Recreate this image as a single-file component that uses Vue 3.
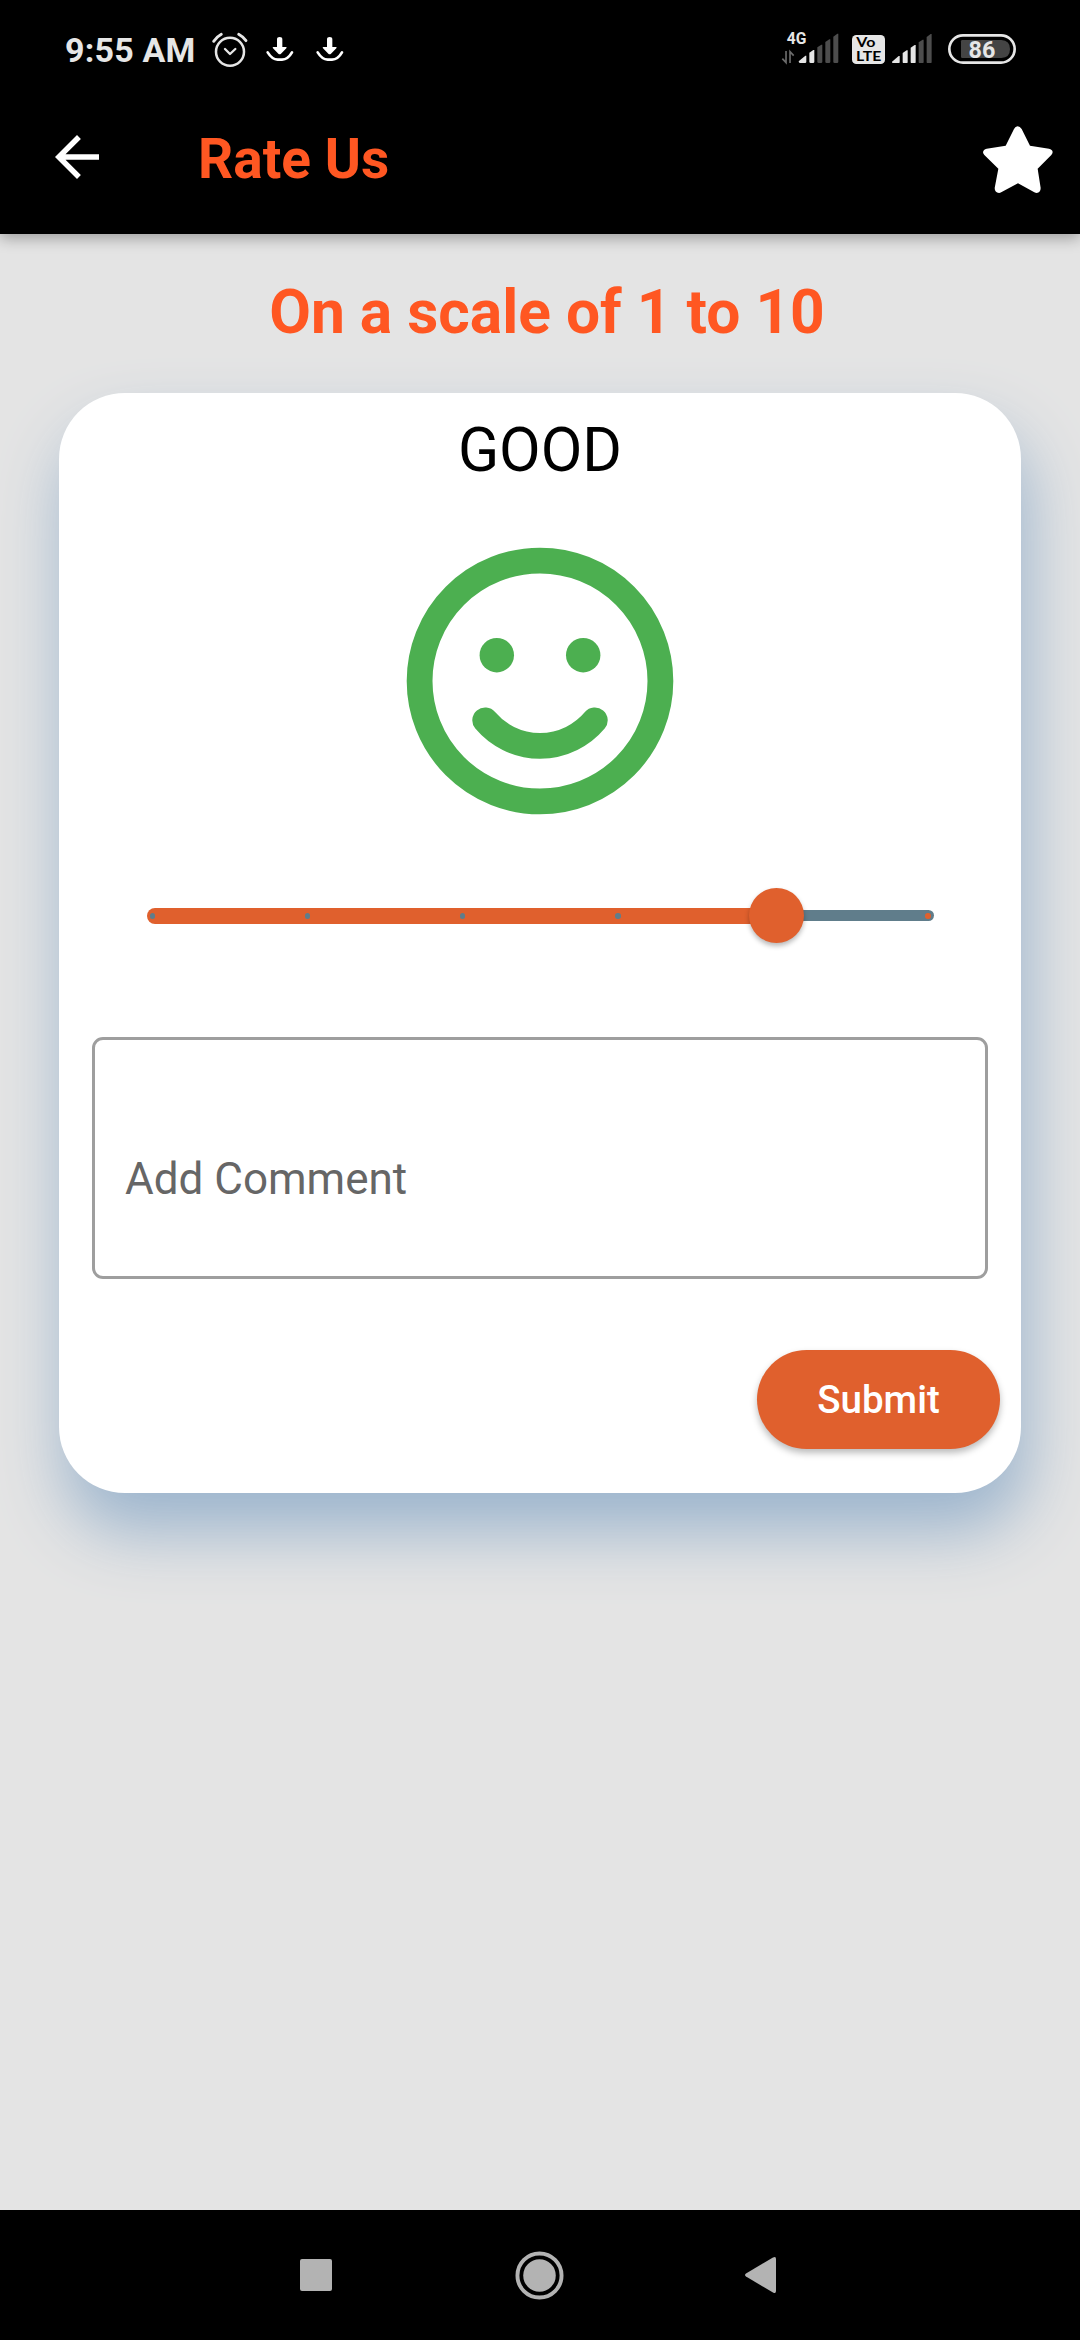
<script setup>
import { ref, computed } from 'vue'

const max = 5
const rating = ref(4)
const comment = ref('')
const percent = computed(() => (rating.value / max) * 100)
const ticks = Array.from({ length: max + 1 }, (_, i) => i).filter((i) => i !== rating.value)

const bars = [
  'M0 83 L20 66 H23 V84 Q23 88 19 88 H4 Q0 88 0 83z',
  'M32 57 L44 49 H47 V84 Q47 88 43 88 H36 Q32 88 32 84z',
  'M56 41 L68 33 H71 V84 Q71 88 67 88 H60 Q56 88 56 84z',
  'M80 25 L92 17 H95 V84 Q95 88 91 88 H84 Q80 88 80 84z',
  'M104 9 L116 0 H119 V84 Q119 88 115 88 H108 Q104 88 104 84z',
]
</script>

<template>
  <div class="screen">
    <header class="top">
      <div class="status">
        <span class="time">9:55 AM</span>
        <svg class="alarm" viewBox="510 36 120 108" fill="none" stroke="#e6e6e6" stroke-linecap="round" stroke-linejoin="round">
          <circle cx="570" cy="95" r="42" stroke-width="7.5" />
          <path d="M555 87l15 15 16-15" stroke-width="7" />
          <path d="M521 64Q531 50 544 43M596 43Q609 50 618 62" stroke-width="8.5" />
        </svg>
        <svg v-for="n in 2" :key="n" class="download" viewBox="676 48 90 78">
          <path d="M684 97Q697 118 714 119H727Q745 118 757 97" fill="none" stroke="#fff" stroke-width="8" stroke-linecap="round" />
          <path d="M712 58Q712 51 720 51Q728 51 728 58V81H739Q743 82 740 85L724 101Q720 105 716 101L700 85Q697 82 701 81H712z" fill="#fff" />
        </svg>
        <span class="spacer"></span>
        <svg class="mobile" viewBox="32 30 174 118">
          <text x="49" y="87" class="gen">4G</text>
          <g fill="none" stroke="#6a6a6a" stroke-width="5">
            <path d="M47 108V143L36 131" />
            <path d="M59 144V110L70 122" />
          </g>
          <g transform="translate(85 56)">
            <path v-for="(d, i) in bars" :key="i" :d="d" :fill="i < 2 ? '#e6e6e6' : '#4d4d4d'" />
          </g>
        </svg>
        <svg class="volte" viewBox="246 60 99 87">
          <rect x="246" y="60" width="99" height="87" rx="13" fill="#e6e6e6" />
          <text x="259" y="96" class="vo" textLength="57" lengthAdjust="spacingAndGlyphs">Vo</text>
          <text x="258" y="138" class="lte" textLength="76" lengthAdjust="spacingAndGlyphs">LTE</text>
        </svg>
        <svg class="signal" viewBox="0 0 120 88">
          <path v-for="(d, i) in bars" :key="i" :d="d" :fill="i < 3 ? '#e6e6e6' : '#4d4d4d'" />
        </svg>
        <svg class="battery" viewBox="534 57 204 90">
          <rect x="538" y="61" width="196" height="82" rx="41" fill="none" stroke="#e6e6e6" stroke-width="8" />
          <path d="M577 75H694Q720 76 720 102T694 129H577Q573 129 573 125V79Q573 75 577 75z" fill="#444" />
          <text x="636" y="128" text-anchor="middle" class="level">86</text>
        </svg>
      </div>
      <div class="appbar">
        <svg class="back" viewBox="0 0 24 24" fill="#fff">
          <path d="M20 11H7.83l5.59-5.59L12 4l-8 8 8 8 1.41-1.41L7.83 13H20v-2z" />
        </svg>
        <h1 class="title">Rate Us</h1>
        <svg class="star" viewBox="130 80 210 202" fill="#fff">
          <path d="M198 139L223 89Q227 81 234 81T246 89L271 139L328 148Q338 150 339 158Q339 162 335 167L294 208L303 266Q303 280 291 281Q288 281 284 279L235 252L186 278Q181 281 178 281Q165 280 165 266L176 208L134 167Q130 163 130 159Q131 150 141 148z" />
        </svg>
      </div>
    </header>

    <main class="content">
      <h2 class="heading">On a scale of 1 to 10</h2>
      <section class="card">
        <p class="mood">GOOD</p>
        <svg class="smiley" viewBox="-134 -134 268 268">
          <circle r="120.4" fill="none" stroke="#4caf50" stroke-width="25.8" />
          <circle cx="-43.2" cy="-25.8" r="17.2" fill="#4caf50" />
          <circle cx="43.2" cy="-25.8" r="17.2" fill="#4caf50" />
          <path d="M-54.8 39.3A71.6 71.6 0 0 0 54.8 39.3" fill="none" stroke="#4caf50" stroke-width="25.8" stroke-linecap="round" />
        </svg>
        <div class="slider">
          <div class="track">
            <div class="active" :style="{ width: percent + '%' }"></div>
            <div class="rest"></div>
          </div>
          <div class="marks">
            <i
              v-for="t in ticks"
              :key="t"
              class="tick"
              :class="{ off: t > rating }"
              :style="{ left: (t / max) * 100 + '%' }"
            ></i>
          </div>
          <div class="thumb" :style="{ left: percent + '%' }"></div>
        </div>
        <div class="field">{{ comment || 'Add Comment' }}</div>
        <button class="submit" type="button">Submit</button>
      </section>
    </main>

    <nav class="nav">
      <svg class="square" viewBox="0 0 32 32"><rect width="32" height="32" rx="2" fill="#b3b3b3" /></svg>
      <svg class="home" viewBox="0 0 50 50">
        <circle cx="25" cy="25" r="22.5" fill="none" stroke="#b3b3b3" stroke-width="4" />
        <circle cx="25" cy="25" r="16.6" fill="#b3b3b3" />
      </svg>
      <svg class="prev" viewBox="0 0 31 36"><path d="M1 16.5L28 .5Q31 -1 31 2V34Q31 37 28 35.500L1 19.500Q-1 18 1 16.500z" fill="#b3b3b3" /></svg>
    </nav>
  </div>
</template>

<style>
body {
  margin: 0;
  background: #e4e4e4;
}
</style>

<style scoped>
.screen {
  width: 1080px;
  height: 2340px;
  display: flex;
  flex-direction: column;
  overflow: hidden;
  background: #e4e4e4;
  font-family: Roboto, "Noto Sans", sans-serif;
}
svg {
  display: block;
  flex: none;
}
.top {
  height: 234px;
  flex: none;
  background: #000;
  box-shadow: 0 4px 14px rgba(0, 0, 0, 0.32);
}
.status {
  height: 80px;
  box-sizing: border-box;
  padding: 20px 64px 0 65px;
  display: flex;
  align-items: flex-start;
}
.time {
  width: 145px;
  height: 60px;
  line-height: 61px;
  font-size: 34px;
  font-weight: 700;
  letter-spacing: 0.2px;
  white-space: nowrap;
  color: #e6e6e6;
}
.alarm {
  width: 40px;
  height: 36px;
  margin-top: 12px;
  margin-right: 15px;
}
.download {
  width: 30px;
  height: 26px;
  margin-top: 16px;
  margin-right: 20px;
}
.spacer {
  flex: 1;
}
.mobile {
  width: 58px;
  height: 39.300px;
  margin-top: 5px;
  overflow: visible;
}
.gen {
  font: 700 47px Roboto, sans-serif;
  fill: #e6e6e6;
}
.volte {
  width: 33px;
  height: 29px;
  margin: 15px 0 0 13.300px;
}
.vo {
  font: 700 37px Lato, sans-serif;
  fill: #000;
}
.lte {
  font: 700 41px Lato, sans-serif;
  fill: #000;
}
.signal {
  width: 40px;
  height: 29.300px;
  margin: 13.700px 0 0 7px;
}
.battery {
  width: 68px;
  height: 30px;
  margin: 14px 0 0 16px;
}
.level {
  font: 700 70px Roboto, sans-serif;
  fill: #e6e6e6;
}
.appbar {
  height: 154px;
  box-sizing: border-box;
  padding: 0 27px 0 44px;
  display: flex;
  align-items: center;
}
.back {
  width: 66px;
  height: 66px;
}
.title {
  flex: 1;
  margin: 4px 0 0 88px;
  font-size: 55px;
  line-height: 66px;
  font-weight: 700;
  color: #ff5722;
}
.star {
  width: 70px;
  height: 67.300px;
  margin-top: 6px;
}
.content {
  flex: 1;
  padding: 0 59px;
}
.heading {
  margin: 42px 0 0;
  padding-left: 14px;
  height: 117.300px;
  line-height: 73px;
  font-size: 60.500px;
  font-weight: 700;
  text-align: center;
  color: #ff5722;
}
.card {
  height: 1100px;
  box-sizing: border-box;
  padding: 22px 21px 0 33px;
  display: flex;
  flex-direction: column;
  border-radius: 66px;
  background: #fff;
  box-shadow: 6px 38px 66px rgb(155, 180, 205);
}
.mood {
  margin: 0 12px 0 0;
  line-height: 72px;
  font-size: 60.500px;
  text-align: center;
  color: #000;
}
.smiley {
  width: 268px;
  height: 268px;
  margin: 59.500px 0 0 314px;
}
.slider {
  position: relative;
  width: 786.500px;
  height: 55px;
  margin: 73.500px 0 0 55px;
}
.track {
  height: 55px;
  display: flex;
  align-items: center;
}
.active {
  height: 16.500px;
  border-radius: 8.250px 0 0 8.250px;
  background: #e0602d;
}
.rest {
  flex: 1;
  height: 11px;
  border-radius: 0 5.500px 5.500px 0;
  background: #607d8b;
}
.marks {
  position: absolute;
  top: 24.750px;
  left: 5.500px;
  right: 5.500px;
}
.tick {
  position: absolute;
  top: 0;
  width: 5.500px;
  height: 5.500px;
  margin-left: -2.750px;
  border-radius: 50%;
  background: #607d8b;
}
.tick.off {
  background: #e0602d;
}
.thumb {
  position: absolute;
  top: 0;
  width: 55px;
  height: 55px;
  margin-left: -27.500px;
  border-radius: 50%;
  background: #e0602d;
  box-shadow: 0 3px 5px rgba(0, 0, 0, 0.28);
}
.field {
  width: 896px;
  height: 242px;
  box-sizing: border-box;
  margin-top: 93.500px;
  padding: 38px 30px 0;
  border: 3px solid #9e9e9e;
  border-radius: 11px;
  font-size: 44px;
  line-height: 203px;
  color: #666;
}
.submit {
  align-self: flex-end;
  width: 243px;
  height: 99px;
  margin-top: 71.500px;
  padding: 0;
  border: 0;
  border-radius: 50px;
  background: #e0602d;
  box-shadow: 0 4px 7px rgba(0, 0, 0, 0.27);
  font: 500 38.500px/99px Roboto, sans-serif;
  color: #fff;
}
.nav {
  height: 130px;
  flex: none;
  box-sizing: border-box;
  padding: 0 304px 0 300px;
  display: flex;
  align-items: center;
  justify-content: space-between;
  background: #000;
}
.square {
  width: 32px;
  height: 32px;
}
.home {
  width: 49px;
  height: 49px;
  margin-left: 2px;
}
.prev {
  width: 31px;
  height: 36px;
}
</style>
